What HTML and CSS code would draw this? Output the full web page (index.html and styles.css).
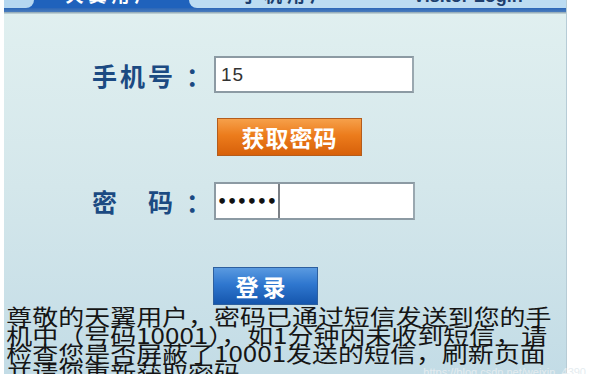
FILE: index.html
```html
<!DOCTYPE html>
<html lang="zh-CN">
<head>
<meta charset="utf-8">
<title>登录</title>
<link rel="stylesheet" href="styles.css">
</head>
<body>
<div class="page">
  <div class="panel">
    <div class="tabs">
      <div class="tab tab-left"></div>
      <div class="tab tab-active"><span class="tab-text">天翼用户</span></div>
      <div class="tab tab-rest">
        <span class="tab-text tab-dark t2">手机用户</span>
        <span class="tab-text tab-dark t3">Visitor Login</span>
      </div>
    </div>
    <div class="bar"></div>
    <div class="shade"></div>

    <div class="form">
      <div class="row">
        <span class="label">手机号<span class="colon">：</span></span>
        <div class="input"><span class="phone">15</span></div>
      </div>
      <div class="btn-row">
        <span></span>
        <div class="btn btn-orange">获取密码</div>
      </div>
      <div class="row row-pass">
        <span class="label">密<span class="gap"></span>码<span class="colon">：</span></span>
        <div class="input input-pass"><span class="dots">••••••</span><span class="caret"></span></div>
      </div>
      <div class="btn-row btn-row-login">
        <span></span>
        <div class="btn btn-blue">登录</div>
      </div>
    </div>

    <div class="notice">尊敬的天翼用户，密码已通过短信发送到您的手<br>机中（号码10001），如1分钟内未收到短信，请<br>检查您是否屏蔽了10001发送的短信，刷新页面<br>并请您重新获取密码</div>
  </div>
  <div class="watermark">https://blog.csdn.net/weixin_4390</div>
</div>
</body>
</html>
```
FILE: styles.css
```css
html, body {
  margin: 0;
  padding: 0;
  background: #ffffff;
}
body {
  width: 592px;
  height: 374px;
  overflow: hidden;
  font-family: "Noto Sans CJK SC", "Noto Sans", sans-serif;
}
.page {
  position: relative;
  width: 592px;
  height: 374px;
  padding-left: 4px;
  box-sizing: border-box;
}
.panel {
  width: 563px;
  height: 374px;
  background: linear-gradient(#e1f0f0 0%, #d4e7eb 50%, #c3dce6 100%);
  border-right: 1px solid #b6ccd6;
  box-sizing: border-box;
  overflow: hidden;
}
.tabs {
  display: flex;
  height: 8px;
  background: #1f62bc;
  overflow: hidden;
}
.tab {
  height: 8px;
  overflow: hidden;
}
.tab-left {
  width: 30px;
  background: #b5d7f0;
  border-bottom-right-radius: 8px;
}
.tab-active {
  width: 155px;
  background: #1f62bc;
  display: flex;
  justify-content: center;
}
.tab-rest {
  flex: 1;
  background: #bcdcf2;
  border-bottom-left-radius: 9px;
  display: flex;
}
.tab-text {
  display: block;
  font-family: "Liberation Sans", "Noto Sans CJK SC", sans-serif;
  font-weight: bold;
  font-size: 18px;
  line-height: 18px;
  margin-top: -13px;
  color: #ffffff;
  letter-spacing: 5px;
  white-space: nowrap;
}
.tab-dark {
  color: #1d3f6e;
}
.t2 {
  margin-left: 52px;
}
.t3 {
  margin-left: 80px;
  letter-spacing: 0;
}
.bar {
  height: 4px;
  background: linear-gradient(#2b66b7, #4b7dbd);
}
.shade {
  height: 2px;
  background: linear-gradient(#8aa2b0, #cbdcdf);
}
.form {
  padding-left: 88px;
  padding-top: 42px;
  display: flex;
  flex-direction: column;
}
.row, .btn-row {
  display: grid;
  grid-template-columns: 122px auto;
  align-items: center;
}
.label {
  display: flex;
  align-items: center;
  font-size: 25px;
  font-weight: bold;
  color: #1b4a82;
  letter-spacing: 3px;
  white-space: nowrap;
  line-height: 30px;
}
.colon {
  margin-left: 10px;
}
.gap {
  display: inline-block;
  width: 30px;
}
.input {
  width: 200px;
  height: 37px;
  box-sizing: border-box;
  border: 2px solid #8c9aa3;
  border-right-color: #9aa8b0;
  background: #ffffff;
  display: flex;
  align-items: center;
  padding-left: 5px;
}
.phone {
  font-family: "Liberation Sans", sans-serif;
  font-size: 19px;
  color: #333;
  letter-spacing: 1px;
}
.btn-row {
  margin-top: 25px;
}
.btn {
  height: 38px;
  box-sizing: border-box;
  color: #ffffff;
  font-weight: bold;
  font-size: 23px;
  display: flex;
  align-items: center;
  justify-content: center;
  letter-spacing: 1px;
}
.btn-orange {
  margin-left: 3px;
  width: 145px;
  background: linear-gradient(#f6a04a 0%, #ec7c1c 45%, #d7600a 100%);
  border: 1px solid #b45c1c;
}
.row-pass {
  margin-top: 26px;
}
.input-pass {
  height: 38px;
  width: 201px;
  padding-left: 1px;
}
.dots {
  font-family: "DejaVu Sans", sans-serif;
  font-size: 16px;
  letter-spacing: -0.3px;
  color: #111;
  font-weight: bold;
}
.caret {
  display: block;
  width: 2px;
  height: 34px;
  background: #7b8086;
  margin-left: 1px;
}
.btn-row-login {
  margin-top: 47px;
}
.btn-blue {
  margin-left: -1px;
  width: 105px;
  background: linear-gradient(#5a9ae0 0%, #2f77cf 45%, #1556ad 100%);
  border: 1px solid #2d5f9e;
  letter-spacing: 4px;
  padding-right: 6px;
}
.notice {
  margin-top: 1px;
  padding-left: 2px;
  font-size: 22px;
  line-height: 18.5px;
  color: #151515;
  white-space: nowrap;
  transform: scaleX(1.18);
  transform-origin: left top;
}
.watermark {
  position: absolute;
  right: 6px;
  bottom: -4px;
  font-family: "Liberation Sans", sans-serif;
  font-size: 11px;
  color: #e4ecf0;
}
```
